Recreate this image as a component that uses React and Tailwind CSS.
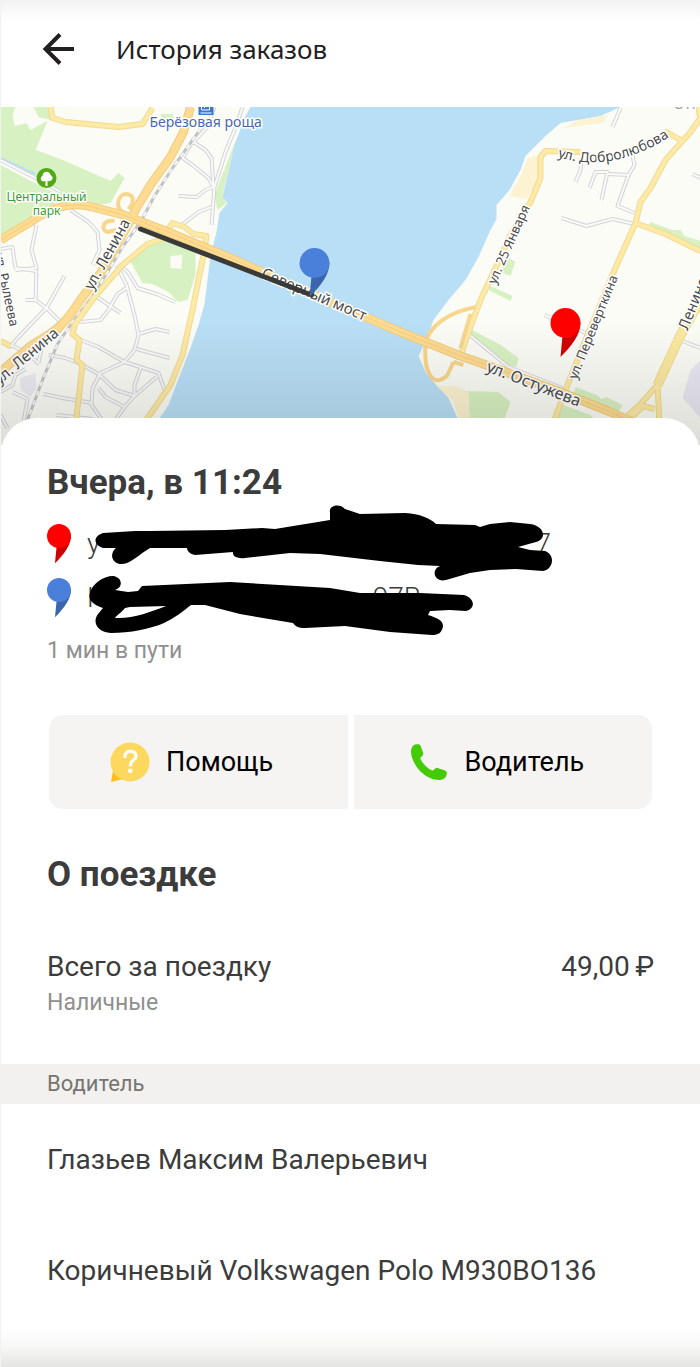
const lanes = [
  "M0 160 L35 178 L60 192",
  "M70 210 L88 222 L97 232 L99 250 L92 265",
  "M36 225 L31 250 L36 268 L15 270",
  "M0 249 L12 247 L15 268 L36 271 L35 300",
  "M214 107 L206 128 L190 145 L182 158 L192 165 L208 178 L213 187",
  "M190 140 L205 150 L211 158 L213 187",
  "M242 107 L236 125 L225 152 L214 187 L211 225",
  "M213 187 L205 190 L196 197 L178 196",
  "M211 207 L198 212 L180 226",
  "M25 300 L35 300 L46 308 L64 276",
  "M46 308 L20 335 L8 348",
  "M46 308 L60 322 L48 332",
  "M10 345 L25 352 L39 364",
  "M60 330 L42 345 L38 362",
  "M0 392 L12 385 L15 375 L25 369",
  "M12 392 L27 399 L22 428",
  "M0 415 L7 428",
  "M116 265 L126 285 L134 315 L138 335 L134 350 L124 362 L100 373 L92 388 L91 405 L105 425",
  "M95 296 L120 313",
  "M126 288 L117 294 L108 310 L100 320 L80 322",
  "M118 264 L128 273 L137 288 L156 294 L175 302",
  "M138 334 L155 329 L169 332",
  "M136 349 L169 358",
  "M80 340 L98 347 L124 362 L140 367 L158 373 L164 390",
  "M48 355 L65 358 L80 364 L98 374 L115 390 L134 396",
  "M140 368 L134 385 L134 396 L156 377",
  "M98 388 L105 397 L124 407 L134 396",
  "M43 394 L62 398 L92 403",
  "M124 407 L115 420",
  "M56 415 L92 419",
  "M620 108 L612 127",
  "M581 158 L580 170 L575 182",
  "M589 188 L595 172 L607 172 L601 200",
  "M607 174 L628 175 L634 165 L632 155",
  "M628 175 L617 206 L634 213",
  "M561 218 L586 226 L612 219 L634 224",
  "M692 174 L700 178",
  "M544 315 L585 333",
  "M468 334 L508 367 L536 378 L562 388",
  "M682 341 L700 348",
];

const roads = [
  "M50 107 L52 118 L65 122 L118 127 L142 124 L152 108",
  "M165 233 L172 223 L184 227 L193 234 L206 236 L203 255 L192 310 L182 355 L170 385 L147 418 L140 430",
  "M167 237 L147 244 L122 265 L95 296 L74 325 L72 334 L79 340 L76 360 L82 365 L75 425",
  "M0 341 L10 346",
  "M580 152 L545 151 L540 157 L540 178 L530 202 L510 235 L495 268 L480 300 L467 335 L460 356",
  "M700 118 L690 132 L665 160 L650 188 L640 202 L635 223 L614 270 L585 340 L565 390 L552 425",
  "M700 122 L698 107",
  "M664 131 L682 141",
  "M635 223 L665 234 L700 251",
  "M657 385 L640 404 L625 418",
  "M657 385 L659 425",
  "M630 418 L643 406 L654 409",
];

const ramps = [
  "M122 212 C114 206 118 194 126 194 C134 195 134 203 128 209",
  "M137 207 C133 211 134 216 138 219",
  "M114 221 C103 219 99 230 107 232 L116 230",
  "M425 342 C430 326 447 312 476 307",
  "M425 344 C423 376 434 388 447 375 L453 362",
  "M470 314 L460 348 M453 362 L463 365",
];

const majors = [
  "M190 107 L183 132 L170 157 L150 185 L136 208 L128 224 L115 247 L100 273 L80 300 L68 317 L57 329 L30 346 L0 372",
  "M0 240 L30 222 C50 208 68 201 92 207 L123 215 L165 231 L232 259 L330 302 L400 332 L460 356 L500 370 L560 392 L610 412 L650 430",
];

function PinShape() {
  return (
    <>
      <path d="M12 28 L30 14 C30 27 21 38 10 49 Z" className="brightness-80" />
      <circle cx="15" cy="15" r="15" />
    </>
  );
}

function Pin({ className }) {
  return (
    <svg viewBox="0 0 30 50" fill="currentColor" className={className} aria-hidden="true">
      <PinShape />
    </svg>
  );
}

function StreetLabel({ x, y, angle, size = 16, children }) {
  return (
    <text transform={`translate(${x} ${y}) rotate(${angle})`} fontSize={size}>
      {children}
    </text>
  );
}

function RouteMap() {
  return (
    <svg
      viewBox="0 107 700 338"
      preserveAspectRatio="xMidYMid slice"
      className="block h-[338px] w-full"
      role="img"
      aria-label="Карта поездки"
    >
      <defs>
        <linearGradient id="shade" x1="0" y1="0" x2="0" y2="1">
          <stop offset="0" stopColor="#000" stopOpacity="0" />
          <stop offset="0.8" stopColor="#000" stopOpacity="0.1" />
          <stop offset="1" stopColor="#000" stopOpacity="0.12" />
        </linearGradient>
        <path id="dobro" d="M557 157 Q615 175 676 132" />
      </defs>

      <rect x="0" y="107" width="700" height="338" fill="#fbfcf5" />

      {/* parks */}
      <g fill="#d8f1c2">
        <path d="M0 107 H15 L12 115 L14 126 L26 123 L30 130 L47 121 L35 150 L60 159 L110 181 L118 173 L124 178 L110 203 L90 206 L68 203 L45 200 L60 190 L0 159 Z" />
        <path d="M33 107 H50 V120 L38 117 Z" />
        <path d="M0 165 L40 186 L62 196 L50 208 L0 235 Z" />
        <path d="M150 243 L168 239 L195 252 V275 L187 300 L178 302 L168 292 L152 284 L142 283 L129 260 Z" />
        <path d="M236 138 L228 170 L222 195 L226 203 L217 210 L214 195 Z" />
        <path d="M160 114 H172 L174 120 L162 120 Z" />
        <path d="M508 258 L515 262 L510 276 L500 272 Z" />
        <path d="M490 286 L512 296 L510 301 L488 290 Z" />
        <path d="M468 328 L500 345 L518 358 L516 367 L503 364 L484 350 L467 334 Z" />
        <path d="M650 222 L672 230 L680 230 L684 236 L700 241 V249 L648 226 Z" />
        <path d="M575 387 L596 395 L601 399 L606 397 L622 405 L616 415 L572 398 Z" />
        <path d="M464 391 L498 392 L510 402 L500 430 L470 428 Z" />
        <path d="M560 404 L590 415 L605 430 H552 Z" />
      </g>
      <path d="M170 256 L182 255 L181 269 L170 268 Z" fill="#fbfcf5" />
      <path d="M19 378 L35 373 L36 388 L30 397 L20 390 Z" fill="#ecebf3" />
      <path d="M690 370 L700 360 V418 L682 398 Z" fill="#e9e8f2" />

      {/* reservoir */}
      <path
        d="M250 107 L244 118 L234 145 L227 175 L222 197 L227 203 L219 213 L216 232 L210 256 L207 280 L204 304 L198 325 L190 348 L176 384 L168 405 L158 420 L150 445 H460 L457 418 L448 398 L436 385 L426 374 L418 356 L426 340 L433 320 L448 300 L465 280 L478 257 L489 232 L496 219 L496 205 L509 190 L520 170 L525 156 L545 136 L560 123 L600 116 L620 107 Z"
        fill="#b9dff6"
      />
      <g fill="#fdf3d2">
        <path d="M563 128 L578 120 L607 115 L602 123 Z" />
        <path d="M527 158 L540 155 L539 178 L526 199 L509 196 L521 174 Z" />
        <path d="M436 386 L456 386 L468 392 L470 430 H462 L452 400 Z" />
      </g>
      <path d="M0 158 L35 174" stroke="#b9dff6" strokeWidth="2" />

      {/* streets: casing first, then the light core */}
      <g fill="none" strokeLinejoin="round">
        <g stroke="#d3d4d9" strokeWidth="4">
          {lanes.map((d) => <path key={d} d={d} />)}
        </g>
        <g stroke="#fafaf8" strokeWidth="2">
          {lanes.map((d) => <path key={d} d={d} />)}
        </g>
        <path
          d="M206 120 L195 136 L172 168 L154 196 L140 222 L122 247 L106 274 L90 299 L72 322 L57 344 L42 380 L25 425"
          stroke="#c2c3c6"
          strokeWidth="3"
        />
        <path
          d="M206 120 L195 136 L172 168 L154 196 L140 222 L122 247 L106 274 L90 299 L72 322 L57 344 L42 380 L25 425"
          stroke="#f8f8f8"
          strokeWidth="2"
          strokeDasharray="5 5"
        />
        <g stroke="#f2da8f" strokeWidth="6">
          {roads.map((d) => <path key={d} d={d} />)}
        </g>
        <g stroke="#fdeaa6" strokeWidth="4">
          {roads.map((d) => <path key={d} d={d} />)}
        </g>
        <path d="M700 300 L680 335 L657 385" stroke="#f2da8f" strokeWidth="10" />
        <path d="M700 300 L680 335 L657 385" stroke="#fbe9a0" strokeWidth="8" />
        <g stroke="#f8d68c" strokeWidth="4">
          {ramps.map((d) => <path key={d} d={d} />)}
        </g>
        <g stroke="#f3cb7d" strokeWidth="9">
          {majors.map((d) => <path key={d} d={d} />)}
        </g>
        <g stroke="#fddc92" strokeWidth="7">
          {majors.map((d) => <path key={d} d={d} />)}
        </g>
        <path d={majors[1]} stroke="#f6cd80" strokeWidth="1" />
      </g>

      <g
        className="font-['Noto_Sans',sans-serif]"
        fill="#4a4a4a"
        stroke="#ffffff"
        strokeWidth="3"
        strokeLinejoin="round"
        paintOrder="stroke"
      >
        <StreetLabel x={92} y={291} angle={-61} size={15}>ул. Ленина</StreetLabel>
        <StreetLabel x={-1} y={385} angle={-40} size={15}>ул. Ленина</StreetLabel>
        <StreetLabel x={-6} y={254} angle={78} size={13}>ул. Рылеева</StreetLabel>
        <StreetLabel x={260} y={277} angle={23} size={15}>Северный мост</StreetLabel>
        <StreetLabel x={495} y={285} angle={-66} size={13}>ул. 25 Января</StreetLabel>
        <StreetLabel x={576} y={380} angle={-68} size={13}>ул. Переверткина</StreetLabel>
        <StreetLabel x={687} y={331} angle={-68} size={15}>Ленинский</StreetLabel>
        <StreetLabel x={485} y={371} angle={21} size={16}>ул. Остужева</StreetLabel>
        <text fontSize="14">
          <textPath href="#dobro">ул. Добролюбова</textPath>
        </text>
        <text x="673" y="109" fontSize="14" fill="#9b9ba3">ОТРОЖКА</text>
        <text x="149" y="127" fontSize="14" fill="#4968b0">Берёзовая роща</text>
        <g fill="#3f9a35" fontSize="12" textAnchor="middle">
          <text x="46" y="201">Центральный</text>
          <text x="46" y="215">парк</text>
        </g>
      </g>

      {/* park and station marks */}
      <circle cx="46" cy="178" r="10" fill="#52a813" />
      <path
        d="M45 186 V181 C40 183 39 177 42 176 C42 171 49 170 50 175 C54 177 52 182 47 181 V186 Z"
        fill="#ffffff"
      />
      <path d="M198 107 H213 V115 H198 Z" fill="#3c78cf" />
      <path d="M200 113 H211 M201 107 V110 H209 V107 M204 107 V108" stroke="#ffffff" strokeWidth="1" fill="none" />

      <rect x="0" y="320" width="700" height="125" fill="url(#shade)" />

      {/* travelled route */}
      <path d="M140 229 L311 295" stroke="#3a3a38" strokeWidth="5" strokeLinecap="round" />

      <g transform="translate(299 248)" fill="#4a80d9">
        <PinShape />
      </g>
      <g transform="translate(550 308)" fill="#ff0000">
        <PinShape />
      </g>
    </svg>
  );
}

// Marker strokes that hide the two addresses
function Redaction() {
  return (
    <svg
      viewBox="47 500 520 140"
      className="absolute -top-4 left-0 h-[140px] w-[520px]"
      aria-hidden="true"
    >
      <path d="M103 532 L135 530 L150 530 L225 529 L262 527 L275 528 L330 519 L330 512 C328 504 340 502 345 508 L360 513 L405 512 C420 513 430 517 436 523 L475 524 L480 526 L490 523 L510 521 L530 523 C545 525 547 538 536 541 L518 546 L530 549 L545 550 C556 554 553 569 543 570 L516 568 L490 569 L470 572 L446 579 C435 582 430 569 440 565 L418 564 L380 560 L320 553 L290 552 L245 557 C237 558 232 555 233 551 L195 554 C190 553 187 550 187 547 L150 547 C140 553 136 558 127 562 C117 566 108 558 114 549 L116 547 L103 547 C93 544 93 535 103 532 Z" />
      <path
        fillRule="evenodd"
        d="M90 592 C92 583 103 575 113 575 C122 576 124 586 115 589 L128 591 L138 590 L142 585 L230 581 L330 587 L360 592 L420 592 L464 594 C476 598 475 608 466 610 L450 609 L430 610 L428 614 C437 617 443 619 443 625 C442 632 438 634 432 634 L390 631 L345 625 L305 627 C298 627 295 625 293 622 L240 613 L205 604 L191 604 C182 611 176 616 164 622 C150 628 130 632 111 632 C97 631 92 621 98 613 L103 607 C91 603 88 598 90 592 Z M125 607 C122 611 117 614 115 617 C133 618 150 611 166 605 L130 606 Z"
      />
    </svg>
  );
}

function HelpIcon() {
  return (
    <svg viewBox="0 0 40 40" className="size-10 shrink-0" aria-hidden="true">
      <path d="M3 29 L1 40 L13 37 Z" fill="#fbbf1c" />
      <circle cx="20" cy="20" r="19.500" fill="#fdd85f" />
      <path
        d="M15 14.500 C15 7.500 26 7.500 26 14 C26 18.500 20.500 18 20.500 23"
        fill="none"
        stroke="#fffdf5"
        strokeWidth="3.500"
        strokeLinecap="round"
      />
      <circle cx="20.300" cy="28.800" r="2.400" fill="#fffdf5" />
    </svg>
  );
}

function PhoneIcon() {
  return (
    <svg viewBox="0 0 36 36" className="size-9 shrink-0" aria-hidden="true">
      <path
        d="M5 .3 L7.500 .2 Q9 .2 9.700 2 L12.300 9.500 Q12.500 10.500 11.600 11.400 L9.800 13.200 Q9 14 9.600 15.300 C12 20 16 24 20.500 26.300 Q21.800 27 22.600 26 L24.600 24.300 Q25.500 23.600 26.500 23.900 L34 26.500 Q36 27.300 35.900 29 C35.700 33.500 32.500 36 28 36 C22 36 15 33 9 27 C3 20 0 13 0 7.500 C0 3.500 2 1 5 .3 Z"
        fill="#43cb05"
      />
    </svg>
  );
}

export default function App() {
  return (
    <div className="flex min-h-screen flex-col border-l border-[#f2f2f2] bg-white font-[Roboto,sans-serif] text-[#3c3c3c]">
      <header className="flex h-[107px] items-center gap-10 bg-linear-to-b from-[#f2f2f2] to-white to-20% pb-[10px] pl-[39px] text-[#21201f]">
        <button type="button" aria-label="Назад" className="cursor-pointer">
          <svg viewBox="0 0 36 36" className="size-9" fill="none" stroke="currentColor" strokeWidth="4">
            <path d="M34 18 H6 M20 3.500 L5.500 18 L20 32.500" />
          </svg>
        </button>
        <h1 className="font-['Noto_Sans',sans-serif] text-[26px] leading-9">История заказов</h1>
      </header>

      <RouteMap />

      <main className="relative -mt-[27px] flex grow flex-col rounded-t-[36px] bg-white pt-[43px]">
        <section className="px-[46px]">
          <h2 className="text-[35px] leading-11 font-bold">Вчера, в 11:24</h2>

          <ul className="relative mt-3 text-[28px] leading-9 font-light">
            <li className="flex h-[54px] items-center gap-4">
              <Pin className="h-10 w-6 text-[#ff0000]" />
              <span className="flex w-[464px] justify-between">
                <span>у</span>
                <span>7</span>
              </span>
            </li>
            <li className="flex h-[54px] items-center gap-4">
              <Pin className="h-10 w-6 text-[#4a80d9]" />
              <span className="flex w-[334px] justify-between">
                <span>Н</span>
                <span>97В</span>
              </span>
            </li>
            <Redaction />
          </ul>

          <p className="mt-[10px] text-[23px] leading-8 text-[#8f8f8f]">1 мин в пути</p>

          <div className="mx-[2px] mt-12 grid grid-cols-2 gap-[6px] text-[27px] text-black">
            <button
              type="button"
              className="flex h-[94px] cursor-pointer items-center gap-4 rounded-l-[14px] bg-[#f5f4f2] pl-[61px]"
            >
              <HelpIcon />
              Помощь
            </button>
            <button
              type="button"
              className="flex h-[94px] cursor-pointer items-center gap-[18px] rounded-r-[14px] bg-[#f5f4f2] pl-[57px]"
            >
              <PhoneIcon />
              Водитель
            </button>
          </div>

          <h2 className="mt-11 text-[35px] leading-11 font-bold">О поездке</h2>

          <div className="mt-[52px] flex justify-between text-[28px] leading-9">
            <p>Всего за поездку</p>
            <p>49,00{"\u2009"}₽</p>
          </div>
          <p className="mt-[2px] text-[23px] leading-8 text-[#8f8f8f]">Наличные</p>
        </section>

        <section className="mt-[45px]">
          <h3 className="bg-[#f2f1f0] px-[46px] text-[22px] leading-10 text-[#77756f]">Водитель</h3>
          <p className="mt-[38px] px-[46px] text-[28px] leading-9">Глазьев Максим Валерьевич</p>
          <p className="mt-[75px] px-[46px] text-[28px] leading-9">Коричневый Volkswagen Polo М930ВО136</p>
        </section>

        <div className="mt-auto h-10 bg-linear-to-t from-[#e4e4e2] via-[#f7f7f6] to-white" />
      </main>
    </div>
  );
}
